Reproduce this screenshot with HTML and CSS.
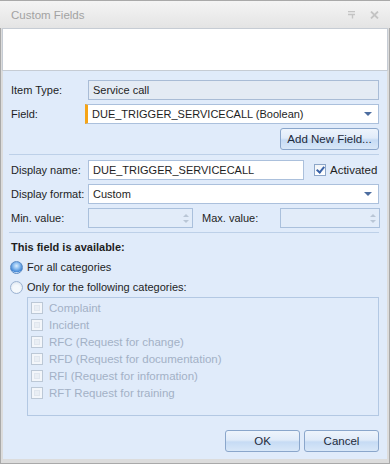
FILE: index.html
```html
<!DOCTYPE html>
<html lang="en">
<head>
    <meta charset="UTF-8">
    <title>Custom Fields</title>
    <link rel="stylesheet" href="styles.css">
</head>
<body>
    <div class="window">
        <div class="titlebar">
            <span class="title">Custom Fields</span>
            <span class="title-icons">
                <svg width="8" height="8" viewBox="0 0 8 8"><path d="M0 0.5h7M0 3.5h7M4.5 3.5v4" stroke="#c4c4c4" stroke-width="1.4" fill="none"/></svg>
                <svg width="9" height="8" viewBox="0 0 9 8"><path d="M1 0.5l7 7M8 0.5l-7 7" stroke="#c4c4c4" stroke-width="1.8" fill="none"/></svg>
            </span>
        </div>
        <div class="header-panel"></div>

        <div class="main">
            <div class="row">
                <label class="lbl">Item Type:</label>
                <div class="edit disabled">Service call</div>
            </div>
            <div class="row gap4">
                <label class="lbl">Field:</label>
                <div class="edit combo required">
                    <span>DUE_TRIGGER_SERVICECALL (Boolean)</span>
                    <i class="arrow"></i>
                </div>
            </div>
            <div class="row gap4 right">
                <button class="btn add-btn">Add New Field...</button>
            </div>
            <div class="sep first-sep"></div>

            <div class="row gap5">
                <label class="lbl">Display name:</label>
                <div class="edit name-edit">DUE_TRIGGER_SERVICECALL</div>
                <span class="check checked"></span>
                <span class="check-label">Activated</span>
            </div>
            <div class="row gap4">
                <label class="lbl">Display format:</label>
                <div class="edit combo">
                    <span>Custom</span>
                    <i class="arrow"></i>
                </div>
            </div>
            <div class="row gap4">
                <label class="lbl">Min. value:</label>
                <div class="edit spin"><span class="spin-btns"><i class="up"></i><i class="down"></i></span></div>
                <label class="lbl max-lbl">Max. value:</label>
                <div class="edit spin max-spin"><span class="spin-btns"><i class="up"></i><i class="down"></i></span></div>
            </div>
            <div class="sep second-sep"></div>

            <div class="heading">This field is available:</div>
            <div class="radio-row first-radio">
                <span class="radio selected"></span>
                <span>For all categories</span>
            </div>
            <div class="radio-row">
                <span class="radio"></span>
                <span>Only for the following categories:</span>
            </div>

            <div class="groupbox">
                <div class="cat"><span class="check disabled-check"></span>Complaint</div>
                <div class="cat"><span class="check disabled-check"></span>Incident</div>
                <div class="cat"><span class="check disabled-check"></span>RFC (Request for change)</div>
                <div class="cat"><span class="check disabled-check"></span>RFD (Request for documentation)</div>
                <div class="cat"><span class="check disabled-check"></span>RFI (Request for information)</div>
                <div class="cat"><span class="check disabled-check"></span>RFT Request for training</div>
            </div>

            <div class="buttons">
                <button class="btn ok-btn">OK</button>
                <button class="btn cancel-btn">Cancel</button>
            </div>
        </div>
    </div>
</body>
</html>
```

FILE: styles.css
```css
body { margin: 0; font-family: "Liberation Sans", Arial, sans-serif; font-size: 11px; color: #1e1e1e; }
.window {
    width: 390px; height: 464px; box-sizing: border-box;
    border: 1px solid #a9a9a9; background: #dcdcdc;
    display: flex; flex-direction: column;
}
.titlebar {
    height: 27px; margin: 0 -1px; padding: 0 11px;
    display: flex; align-items: center; justify-content: space-between;
    background: linear-gradient(#f4f4f4, #e4e4e4);
}
.title { font-size: 11.5px; color: #a2a2a2; padding-top: 1px; }
.title-icons { display: flex; gap: 14px; align-items: center; }
.header-panel {
    height: 41px; margin: 0 1px; background: #fff;
    border: 1px solid #c6ccd4;
}
.main {
    flex: 1; margin: 0 2px 4px 2px; background: #e0ebfa;
    padding: 9px 8px 7px 8px; display: flex; flex-direction: column;
}
.row { display: flex; align-items: center; height: 20px; }
.gap4 { margin-top: 4px; }
.gap5 { margin-top: 5px; }
.right { justify-content: flex-end; height: 22px; }
.lbl { width: 77px; flex: none; }
.edit {
    flex: 1; height: 20px; box-sizing: border-box;
    border: 1px solid #abc0dc; background: #fff;
    padding: 0 4px; line-height: 18px; white-space: nowrap;
}
.edit.disabled { background: #e4ebf4; border-color: #a9bcd6; }
.combo { display: flex; justify-content: space-between; align-items: center; }
.required { margin-left: -3px; border-left: 3px solid #f5a417; padding-left: 4px; }
.arrow {
    width: 0; height: 0; margin-right: 2px;
    border-left: 4px solid transparent; border-right: 4px solid transparent;
    border-top: 4px solid #4c6da0;
}
.name-edit { flex: none; width: 216px; }
.check {
    width: 12px; height: 12px; flex: none; box-sizing: border-box;
    border: 1px solid #8da6c8; background: linear-gradient(#f1f4f8, #fff);
    position: relative;
}
.row .check { margin-left: 10px; margin-right: 4px; }
.check.checked::after {
    content: ""; position: absolute; left: 3px; top: 0px;
    width: 3px; height: 6px; border: solid #3a63a8; border-width: 0 2px 2px 0;
    transform: rotate(40deg);
}
.check-label { font-size: 11.5px; }
.spin {
    flex: none; width: 105px; background: #e2ecf9; border-color: #aac0dc;
    display: flex; justify-content: flex-end; padding: 0 2px;
}
.spin-btns { display: flex; flex-direction: column; justify-content: center; gap: 3px; width: 8px; align-items: center; }
.spin-btns i { width: 0; height: 0; border-left: 3px solid transparent; border-right: 3px solid transparent; }
.spin-btns .up { border-bottom: 3px solid #b9c6d6; }
.spin-btns .down { border-top: 3px solid #b9c6d6; }
.max-lbl { margin-left: 9px; width: 78px; }
.max-spin { width: 100px; }
.sep { height: 1px; background: #bdd0e8; margin-left: -2px; }
.first-sep { margin-top: 4px; }
.second-sep { margin-top: 4px; }
.heading { font-weight: bold; margin-top: 7px; line-height: 14px; }
.radio-row { display: flex; align-items: center; gap: 4px; height: 16px; margin-top: 4px; margin-left: -1px; }
.first-radio { margin-top: 5px; }
.radio {
    width: 13px; height: 13px; border-radius: 50%; box-sizing: border-box;
    border: 1px solid #9cb3d2;
    background: radial-gradient(circle at 50% 60%, #f4f8fc 40%, #d3deea 100%);
}
.radio.selected {
    border-color: #5a8ac4;
    background: radial-gradient(circle at 50% 35%, #d9ecfd 0, #8bbdf0 35%, #3e83d4 70%, #bdd7f2 72%);
}
.groupbox {
    margin: 2px 0 0 16px; height: 119px; box-sizing: border-box;
    border: 1px solid #b3c8e3; padding: 1px 3px;
}
.cat { display: flex; align-items: center; height: 17px; color: #a3b1c6; font-size: 11.5px; }
.cat .check { margin-right: 6px; }
.disabled-check { border-color: #bcc8d6; background: #f3f6fa; }
.disabled-check::after {
    content: ""; position: absolute; inset: 2px; border: 1px solid #e0e6ee; background: #e9eef4;
}
.buttons { display: flex; justify-content: flex-end; gap: 4px; margin-top: auto; }
.btn {
    height: 22px; box-sizing: border-box; font-family: inherit; font-size: 11.5px; color: #1e2a3a;
    border: 1px solid #8aa6cb; border-radius: 3px; padding: 0;
    background: linear-gradient(#eef4fc 0%, #e0ebf9 45%, #c6dbf4 55%, #d8e7f8 100%);
}
.add-btn { width: 99px; }
.ok-btn { width: 75px; }
.cancel-btn { width: 75px; }
```
